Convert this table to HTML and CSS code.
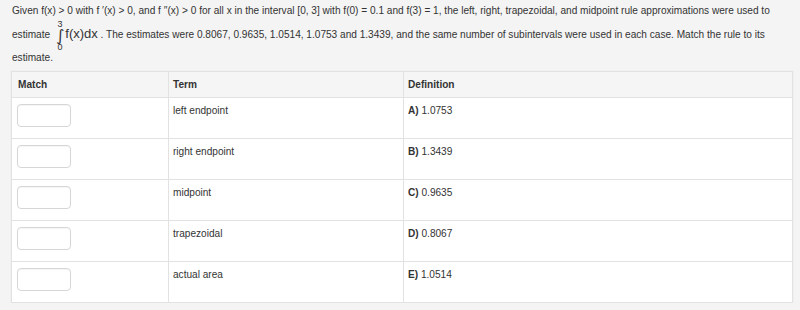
FILE: index.html
```html
<!DOCTYPE html>
<html>
<head>
<meta charset="utf-8">
<link rel="stylesheet" href="styles.css">
</head>
<body>
<div class="page">
  <p class="question">Given f(x) &gt; 0 with f ′(x) &gt; 0, and f ′′(x) &gt; 0 for all x in the interval [0, 3] with f(0) = 0.1 and f(3) = 1, the left, right, trapezoidal, and midpoint rule approximations were used to estimate <span class="integral"><span class="lim">3</span><span class="sign">∫</span><span class="lim">0</span></span><span class="integrand">f(x)dx</span> . The estimates were 0.8067, 0.9635, 1.0514, 1.0753 and 1.3439, and the same number of subintervals were used in each case. Match the rule to its estimate.</p>
  <table class="match-table">
    <thead>
      <tr>
        <th class="col-match">Match</th>
        <th class="col-term">Term</th>
        <th class="col-def">Definition</th>
      </tr>
    </thead>
    <tbody>
      <tr>
        <td class="cell-input"><input class="answer" type="text"></td>
        <td>left endpoint</td>
        <td><b>A)</b> 1.0753</td>
      </tr>
      <tr>
        <td class="cell-input"><input class="answer" type="text"></td>
        <td>right endpoint</td>
        <td><b>B)</b> 1.3439</td>
      </tr>
      <tr>
        <td class="cell-input"><input class="answer" type="text"></td>
        <td>midpoint</td>
        <td><b>C)</b> 0.9635</td>
      </tr>
      <tr>
        <td class="cell-input"><input class="answer" type="text"></td>
        <td>trapezoidal</td>
        <td><b>D)</b> 0.8067</td>
      </tr>
      <tr>
        <td class="cell-input"><input class="answer" type="text"></td>
        <td>actual area</td>
        <td><b>E)</b> 1.0514</td>
      </tr>
    </tbody>
  </table>
</div>
</body>
</html>
```

FILE: styles.css
```css
html, body {
  margin: 0;
  padding: 0;
  background: #f4f4f4;
}
body {
  font-family: "Liberation Sans", Arial, Helvetica, sans-serif;
  font-size: 10.1px;
  color: #333;
}
.page {
  padding: 0 6px 0 11px;
}
.question {
  margin: -1px 0 0 1px;
  line-height: 23px;
  padding-right: 10px;
}
.integral {
  display: inline-flex;
  flex-direction: column;
  align-items: center;
  vertical-align: middle;
  margin: -10px 1px -10px 3px;
  line-height: 8px;
}
.integral .lim {
  font-size: 9px;
  line-height: 8px;
}
.integral .sign {
  font-family: "DejaVu Sans", sans-serif;
  font-size: 16px;
  line-height: 15px;
}
.integrand {
  font-size: 13px;
}
.match-table {
  width: 782px;
  border-collapse: collapse;
  background: #fff;
  border: 1px solid #e2e2e2;
  box-shadow: 0 0 1px #ddd;
  margin-top: 2px;
}
.match-table th,
.match-table td {
  border: 1px solid #e2e2e2;
  text-align: left;
  vertical-align: top;
  line-height: 14px;
}
.match-table th {
  background: #f5f5f5;
  font-weight: bold;
  padding: 6px 4px 5px;
  height: 14px;
}
.match-table td {
  padding: 6px 4px 0;
  height: 34px;
}
.match-table th.col-match {
  padding-left: 6px;
}
.col-match { width: 146px; }
.col-term { width: 226px; }
.match-table td.cell-input {
  padding-left: 5px;
}
.answer {
  display: block;
  box-sizing: border-box;
  width: 54px;
  height: 23px;
  margin: 0;
  border: 1px solid #d6d6d6;
  border-radius: 4px;
  background: #fff;
  box-shadow: inset 0 1px 1px rgba(0,0,0,0.04);
}
```
